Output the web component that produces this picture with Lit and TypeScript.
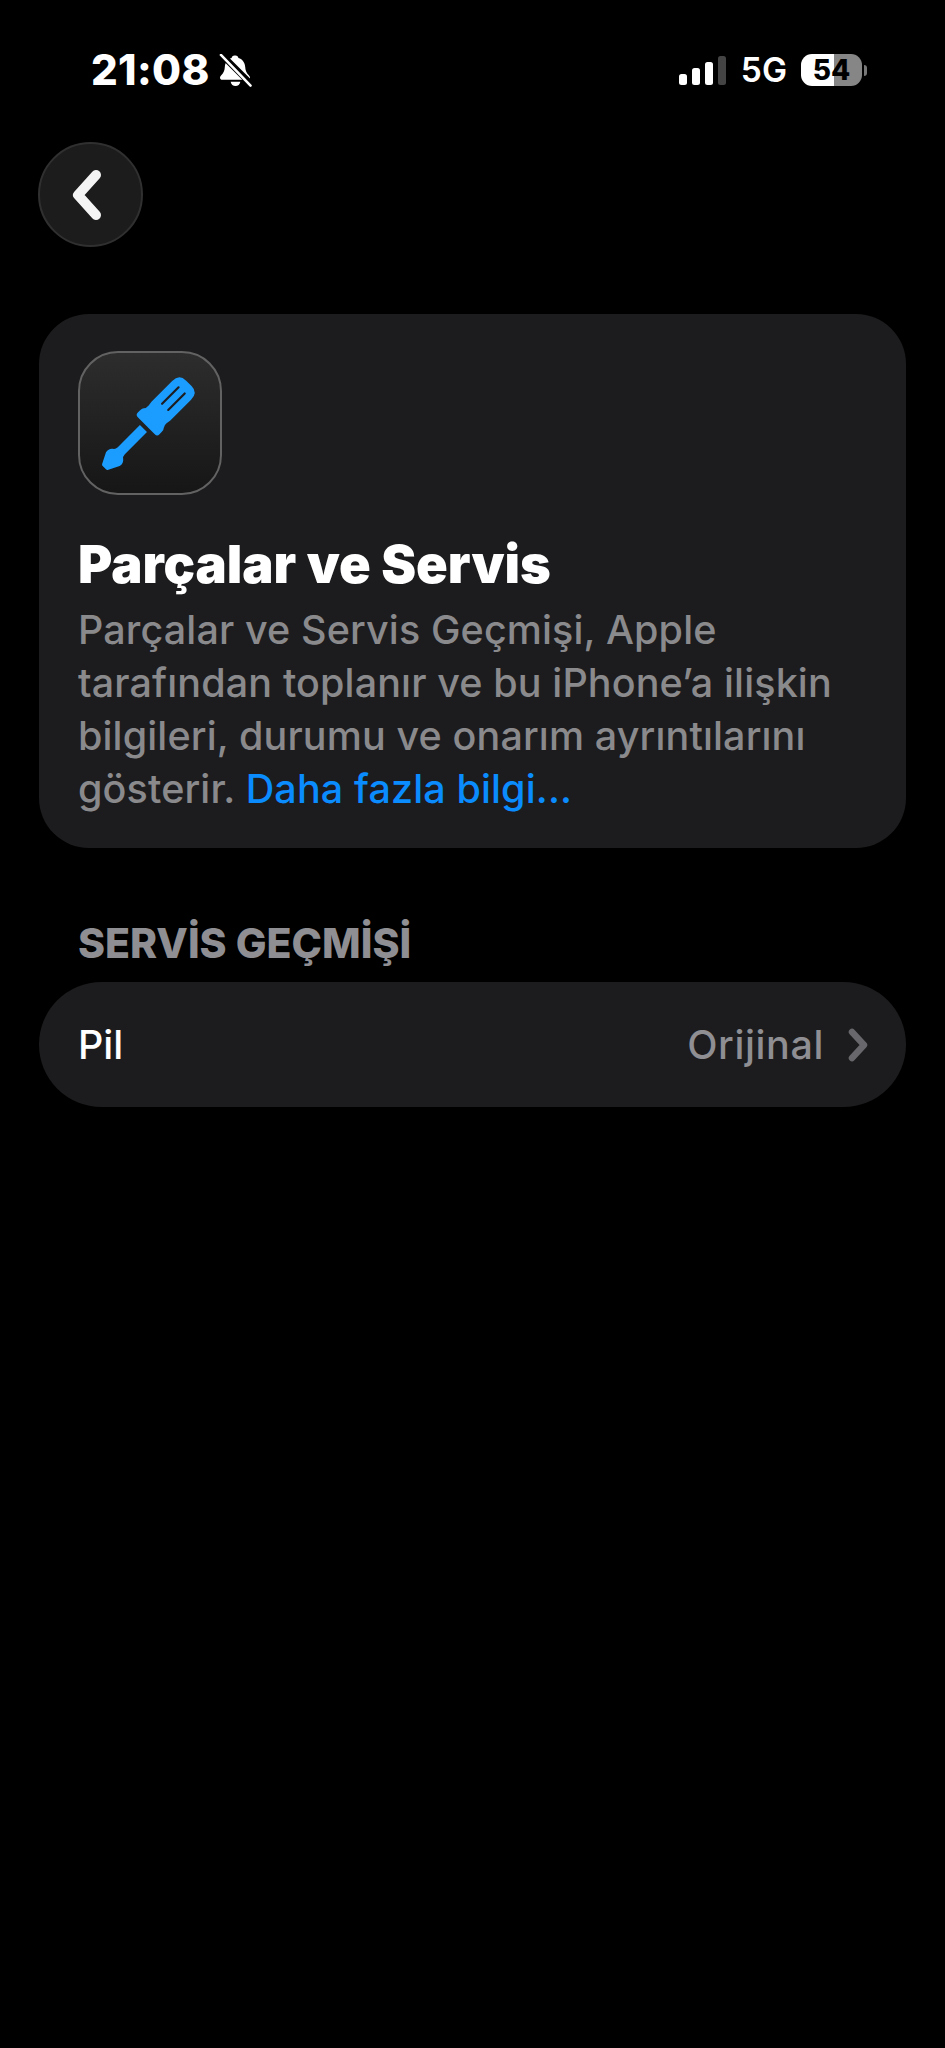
import { LitElement, html, css, svg } from "lit";
import { customElement } from "lit/decorators.js";

@customElement("app-root")
export class AppRoot extends LitElement {
  static styles = css`
    :host { display: block; height: 2048px; background: #000; color: #fff; font-family: Inter, "Liberation Sans", sans-serif; overflow: hidden; }
    .status { display: flex; align-items: center; height: 40px; padding: 50px 0 0 91px; }
    .time { font-size: 42px; font-weight: 800; line-height: 40px; letter-spacing: 0.3px; }
    .bell { width: 33px; height: 33px; margin-left: 9px; }
    .right { margin-left: auto; display: flex; align-items: center; padding-right: 78px; }
    .signal { display: flex; align-items: flex-end; gap: 5px; height: 29px; }
    .signal i { display: block; width: 8px; background: #fff; border-radius: 2.5px; }
    .signal i.off { background: #444; }
    .net { font-size: 33.5px; font-weight: 600; line-height: 32px; margin-left: 15px; }
    .batt { position: relative; width: 61px; height: 32px; margin-left: 14px; border-radius: 11px; overflow: hidden; background: linear-gradient(90deg, #fff 0 54%, #868686 54% 100%); color: #000; font-size: 28px; font-weight: 800; line-height: 32px; text-align: center; }
    .nub { width: 3px; height: 11px; margin-left: 2px; border-radius: 0 3px 3px 0; background: #777; }
    .back { width: 105px; height: 105px; margin: 52px 0 0 38px; box-sizing: border-box; border-radius: 50%; background: #1c1c1c; border: 2px solid #303030; display: flex; align-items: center; justify-content: center; }
    .back svg { width: 36px; height: 52px; margin-right: 6px; }
    .card { margin: 67px 39px 0; height: 534px; box-sizing: border-box; padding: 37px 38px 0 39px; background: #1c1c1e; border-radius: 50px; }
    .icon { width: 144px; height: 144px; box-sizing: border-box; border-radius: 40px; border: 2.5px solid #626262; background: linear-gradient(180deg, #2d2d2e, #161616); }
    .icon svg { display: block; width: 139px; height: 139px; }
    h1 { margin: 39px 0 0; font-size: 52.4px; line-height: 60px; font-weight: 900; letter-spacing: 0; }
    p { margin: 10px 0 0; font-size: 39.5px; line-height: 53px; font-weight: 500; color: #8a8a8d; letter-spacing: 0.12px; }
    a { color: #0a8cff; text-decoration: none; }
    .section { margin: 70px 0 0 78px; font-size: 41px; line-height: 50px; font-weight: 800; color: #8e8e93; letter-spacing: 0; }
    .row { margin: 14px 39px 0; height: 125px; box-sizing: border-box; padding: 0 38px 0 39px; display: flex; align-items: center; background: #1c1c1e; border-radius: 62.5px; font-size: 39.5px; font-weight: 500; }
    .val { margin-left: auto; color: #8e8e93; letter-spacing: 0.6px; }
    .chev { width: 20px; height: 34px; margin-left: 24px; }
  `;

  render() {
    return html`
      <div class="status">
        <span class="time">21:08</span>
        <svg class="bell" viewBox="0 0 34 34">
          <path fill="#fff" d="M17 1.500c1.700 0 2.800 1.100 3 2.600 4.400 1.300 6.800 5 7 9.400.2 3.800 1.200 6 3.700 8.500.8.800 1.300 1.500 1.300 2.400 0 1.300-1 2.100-2.500 2.100H3.500C2 26.500 1 25.700 1 24.400c0-.9.500-1.600 1.300-2.400 2.500-2.500 3.500-4.700 3.700-8.500.2-4.400 2.600-8.100 7-9.400.2-1.500 1.300-2.600 3-2.600zM12 28.500h10c-.4 2.600-2.500 4.500-5 4.500s-4.600-1.900-5-4.500z"/>
          <path stroke="#000" stroke-width="6.500" d="M1 -1L35 33"/>
          <path stroke="#fff" stroke-width="2.600" stroke-linecap="round" d="M2 1L32.500 32.500"/>
        </svg>
        <div class="right">
          <div class="signal">
            <i style="height:11px"></i><i style="height:17px"></i><i style="height:23px"></i><i class="off" style="height:29px"></i>
          </div>
          <span class="net">5G</span>
          <div class="batt">54</div>
          <div class="nub"></div>
        </div>
      </div>
      <div class="back">
        <svg viewBox="0 0 36 52"><path d="M26 6L8 26l18 20" fill="none" stroke="#f4f4f4" stroke-width="10" stroke-linecap="round" stroke-linejoin="round"/></svg>
      </div>
      <div class="card">
        <div class="icon">
          <svg viewBox="0 0 417 417">
            ${svg`<g transform="translate(73 344) rotate(-45)">
              <path fill="#1b9dff" d="M0 -8Q0 -11 4 -13L36 -29Q50 -32 58 -22Q62 -15 72 -15L166 -15L166 15L72 15Q62 15 58 22Q50 32 36 29L4 13Q0 11 0 8Z"/>
              <path fill="#1b9dff" d="M178 -36Q178 -46 188 -46L198 -46Q206 -46 210 -42Q216 -37 226 -38L240 -40L328 -40Q358 -40 358 -12L358 12Q358 40 328 40L240 40L226 38Q216 37 210 42Q206 46 198 46L188 46Q178 46 178 36Z"/>
              <path stroke="#1d1d1f" stroke-width="6.500" stroke-linecap="round" d="M258 -13L328 -13M258 13L328 13"/>
            </g>`}
          </svg>
        </div>
        <h1>Parçalar ve Servis</h1>
        <p>Parçalar ve Servis Geçmişi, Apple<br>tarafından toplanır ve bu iPhone’a ilişkin<br>bilgileri, durumu ve onarım ayrıntılarını<br>gösterir. <a>Daha fazla bilgi...</a></p>
      </div>
      <div class="section">SERVİS GEÇMİŞİ</div>
      <div class="row">
        <span>Pil</span>
        <span class="val">Orijinal</span>
        <svg class="chev" viewBox="0 0 20 34"><path d="M4 4l12 13L4 30" fill="none" stroke="#68686c" stroke-width="6.500" stroke-linecap="round" stroke-linejoin="round"/></svg>
      </div>
    `;
  }
}
